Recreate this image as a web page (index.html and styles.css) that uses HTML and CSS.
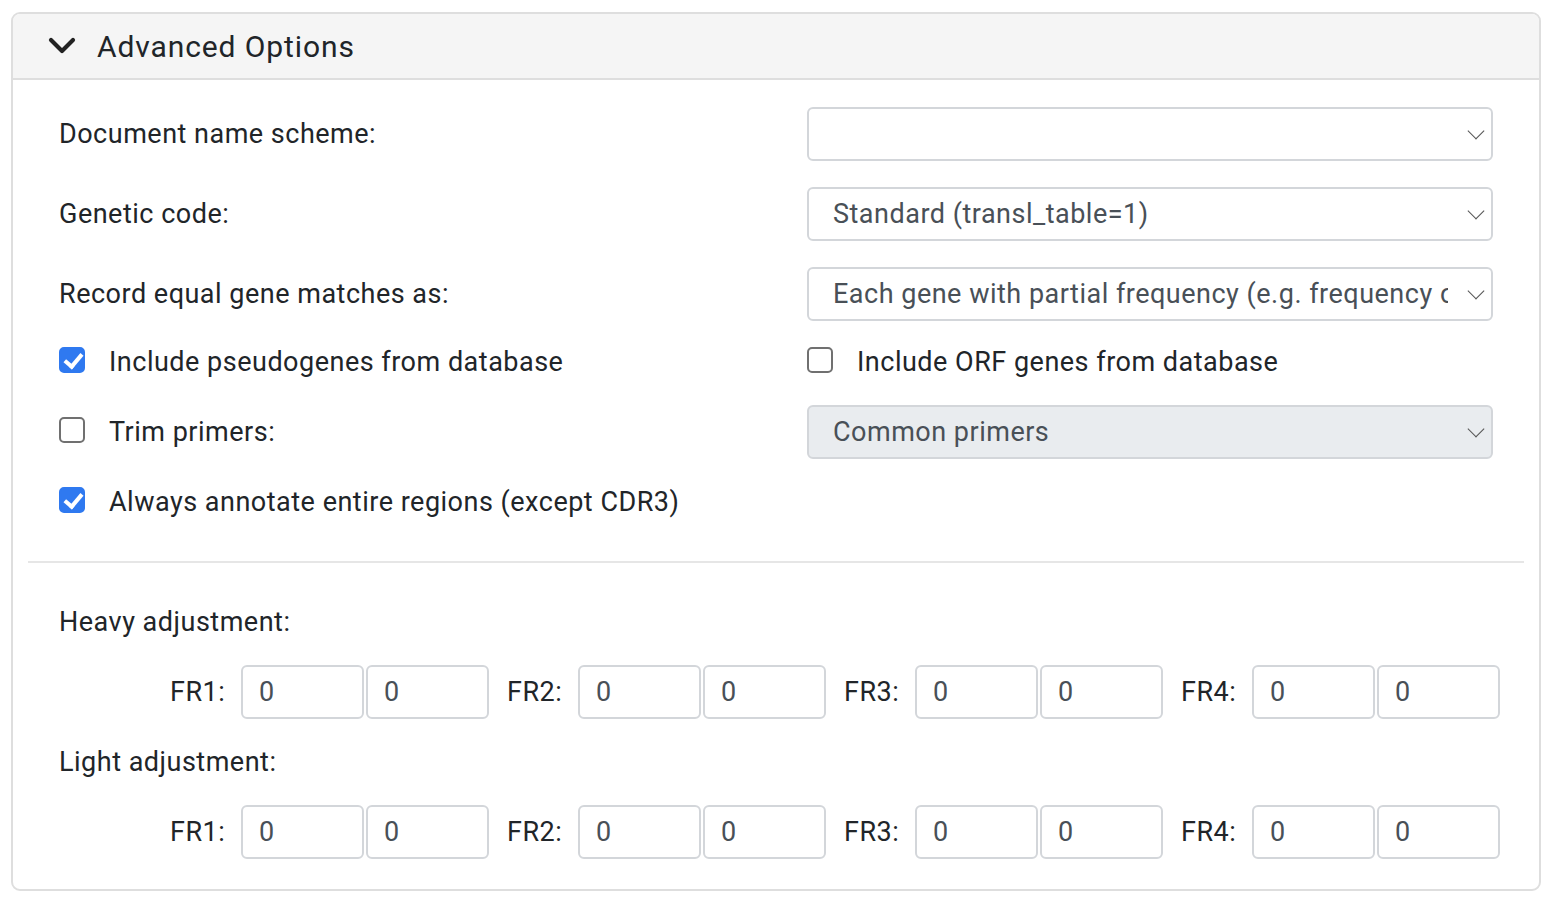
FILE: index.html
```html
<!DOCTYPE html>
<html lang="en">
<head>
    <meta charset="UTF-8">
    <meta name="viewport" content="width=device-width, initial-scale=1.0">
    <title>Advanced Options</title>
    <link rel="stylesheet" href="styles.css">
</head>
<body>
    <div class="panel">
        <div class="panel-heading">
            <svg class="caret" width="28" height="18" viewBox="0 0 28 18"><path d="M3 3 L14 14 L25 3" fill="none" stroke="#222" stroke-width="4.2" stroke-linecap="round" stroke-linejoin="round"/></svg>
            <span>Advanced Options</span>
        </div>
        <div class="panel-body">
            <div class="options">
                <div class="row">
                    <label>Document name scheme:</label>
                    <div class="select"><span></span><i class="chev"></i></div>
                </div>
                <div class="row">
                    <label>Genetic code:</label>
                    <div class="select"><span>Standard (transl_table=1)</span><i class="chev"></i></div>
                </div>
                <div class="row last-select">
                    <label>Record equal gene matches as:</label>
                    <div class="select"><span>Each gene with partial frequency (e.g. frequency of</span><i class="chev"></i></div>
                </div>
                <div class="row small">
                    <div class="check"><span class="box on"></span>Include pseudogenes from database</div>
                    <div class="check"><span class="box"></span>Include ORF genes from database</div>
                </div>
                <div class="row small">
                    <div class="check"><span class="box"></span>Trim primers:</div>
                    <div class="select disabled"><span>Common primers</span><i class="chev"></i></div>
                </div>
                <div class="row small">
                    <div class="check"><span class="box on"></span>Always annotate entire regions (except CDR3)</div>
                </div>
            </div>

            <hr class="divider">

            <div class="adjust">
                <p class="adjust-title">Heavy adjustment:</p>
                <div class="fr-row">
                    <div class="fr"><label>FR1:</label><div class="num">0</div><div class="num">0</div></div>
                    <div class="fr"><label>FR2:</label><div class="num">0</div><div class="num">0</div></div>
                    <div class="fr"><label>FR3:</label><div class="num">0</div><div class="num">0</div></div>
                    <div class="fr"><label>FR4:</label><div class="num">0</div><div class="num">0</div></div>
                </div>
                <p class="adjust-title">Light adjustment:</p>
                <div class="fr-row">
                    <div class="fr"><label>FR1:</label><div class="num">0</div><div class="num">0</div></div>
                    <div class="fr"><label>FR2:</label><div class="num">0</div><div class="num">0</div></div>
                    <div class="fr"><label>FR3:</label><div class="num">0</div><div class="num">0</div></div>
                    <div class="fr"><label>FR4:</label><div class="num">0</div><div class="num">0</div></div>
                </div>
            </div>
        </div>
    </div>
</body>
</html>
```

FILE: styles.css
```css
body{
    margin: 0;
    padding: 12px 11px 0 11px;
    font-family: Roboto, "Liberation Sans", sans-serif;
    color: #212529;
    background: #fff;
}
.panel{
    border: 2px solid #dedede;
    border-radius: 9px;
    height: 879px;
    box-sizing: border-box;
    overflow: hidden;
}
.panel-heading{
    background-color: #f5f5f5;
    border-bottom: 2px solid #dedede;
    height: 64px;
    display: flex;
    align-items: center;
    padding-left: 35px;
    font-size: 30px;
    letter-spacing: 0.9px;
}
.caret{
    margin-right: 21px;
}
.panel-body{
    padding: 27px 15px 0 15px;
}
.options{
    padding: 0 31px;
}
.row{
    display: grid;
    grid-template-columns: 748px minmax(0, 1fr);
    align-items: center;
    height: 54px;
    margin-bottom: 26px;
    font-size: 27px;
    letter-spacing: 0.5px;
}
.row.last-select{
    margin-bottom: 14px;
}
.row.small{
    margin-bottom: 16px;
}
.select{
    min-width: 0;
    height: 54px;
    box-sizing: border-box;
    border: 2px solid #d3d6da;
    border-radius: 6px;
    display: flex;
    align-items: center;
    padding: 0 7px 0 24px;
    color: #495057;
    background: #fff;
}
.select span{
    flex: 1;
    min-width: 0;
    white-space: nowrap;
    overflow: hidden;
    margin-right: 22px;
}
.select.disabled{
    background-color: #e9ecef;
}
.chev{
    flex: none;
    width: 11px;
    height: 11px;
    border-right: 1.6px solid #555;
    border-bottom: 1.6px solid #555;
    transform: rotate(45deg);
    margin-top: -6px;
    margin-right: 2px;
}
.check{
    display: flex;
    align-items: center;
}
.box{
    width: 26px;
    height: 26px;
    box-sizing: border-box;
    border: 2px solid #707070;
    border-radius: 5px;
    margin-right: 24px;
    margin-top: -4px;
    position: relative;
}
.box.on{
    background-color: #2f79f0;
    border-color: #2f79f0;
}
.box.on::after{
    content: "";
    position: absolute;
    left: 7px;
    top: 1px;
    width: 7px;
    height: 14px;
    border-right: 4px solid #fff;
    border-bottom: 4px solid #fff;
    transform: rotate(40deg);
}
.divider{
    border: none;
    border-top: 2px solid #e6e6e6;
    margin: 0;
    margin-top: 32px;
}
.adjust{
    padding: 0 27px 0 31px;
    font-size: 27px;
    letter-spacing: 0.5px;
}
.adjust-title{
    margin: 42px 0 0 0;
    height: 34px;
    line-height: 34px;
}
.adjust-title + .fr-row{
    margin-top: 26px;
}
.fr-row + .adjust-title{
    margin-top: 26px;
}
.fr-row{
    display: flex;
    gap: 18px;
    padding-left: 111px;
}
.fr{
    display: flex;
    align-items: center;
    gap: 2px;
}
.fr label{
    width: 69px;
}
.num{
    width: 123px;
    height: 54px;
    box-sizing: border-box;
    border: 2px solid #d3d6da;
    border-radius: 6px;
    display: flex;
    align-items: center;
    padding-left: 16px;
    color: #495057;
}
```
